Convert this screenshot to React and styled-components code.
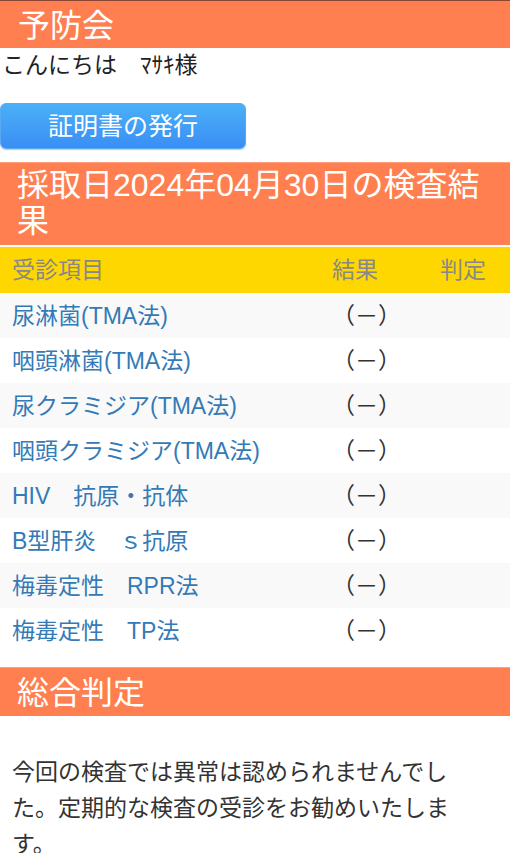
import React from "react";
import styled, { createGlobalStyle } from "styled-components";

const GlobalStyle = createGlobalStyle`
  html, body { margin: 0; padding: 0; background: #fff; }
  body {
    font-family: "Liberation Sans", "Noto Sans CJK JP", sans-serif;
    color: #333;
    -webkit-font-smoothing: antialiased;
  }
  * { box-sizing: border-box; }
`;

const Page = styled.div`
  width: 510px;
  display: flex;
  flex-direction: column;
`;

const AppBar = styled.header`
  height: 48px;
  background: #ff7f50;
  border-top: 1px solid #8a4634;
  color: #fff;
  font-size: 32px;
  line-height: 44px;
  padding: 3px 0 0 18px;
`;

const Greeting = styled.p`
  margin: 0;
  font-size: 23px;
  line-height: 32px;
  padding: 1px 0 0 2px;
  color: #222;
`;

const IssueButton = styled.button`
  margin-top: 22px;
  width: 246px;
  height: 46px;
  border: 1px solid #5aaaf2;
  border-radius: 6px;
  background: linear-gradient(#4bb0f7, #3a8ef5);
  color: #fff;
  font-family: inherit;
  font-size: 25px;
  line-height: 1;
  padding: 0;
  box-shadow: 0 1px 1px rgba(40, 110, 200, 0.35);
`;

const SectionTitle = styled.h2`
  margin: ${(p) => p.$mt}px 0 0;
  background: #ff7f50;
  border-top: 1px solid #ff9e7a;
  color: #fff;
  font-weight: 400;
  font-size: 32px;
  line-height: ${(p) => p.$lh}px;
  padding: ${(p) => p.$pt}px 12px ${(p) => p.$pb}px 17px;
`;

const Table = styled.div`
  margin-top: 2px;
  display: flex;
  flex-direction: column;
`;

const TableRow = styled.div`
  display: grid;
  grid-template-columns: 320px 108px 1fr;
  align-items: center;
  height: ${(p) => (p.$head ? 46 : 45)}px;
  padding-left: 12px;
  font-size: 23px;
  line-height: 30px;
  background: ${(p) => (p.$head ? "#ffd700" : p.$striped ? "#f9f9f9" : "#fff")};
  color: ${(p) => (p.$head ? "#888" : "#333")};
`;

const ItemName = styled.span`
  color: ${(p) => (p.$head ? "#888" : "#337ab7")};
  white-space: nowrap;
`;

const Cell = styled.span`
  white-space: nowrap;
`;

const Summary = styled.p`
  margin: 38px 0 0;
  padding: 0 45px 0 12px;
  font-size: 23px;
  line-height: 36px;
  color: #333;
`;

const items = [
  "尿淋菌(TMA法)",
  "咽頭淋菌(TMA法)",
  "尿クラミジア(TMA法)",
  "咽頭クラミジア(TMA法)",
  "HIV　抗原・抗体",
  "B型肝炎　ｓ抗原",
  "梅毒定性　RPR法",
  "梅毒定性　TP法",
];

export default function App() {
  return (
    <Page>
      <GlobalStyle />
      <AppBar>予防会</AppBar>
      <Greeting>こんにちは　ﾏｻｷ様</Greeting>
      <div>
        <IssueButton type="button">証明書の発行</IssueButton>
      </div>
      <SectionTitle $mt={13} $lh={36} $pt={4} $pb={6}>
        採取日2024年04月30日の検査結果
      </SectionTitle>
      <Table>
        <TableRow $head>
          <ItemName $head>受診項目</ItemName>
          <Cell>結果</Cell>
          <Cell>判定</Cell>
        </TableRow>
        {items.map((name, i) => (
          <TableRow key={name} $striped={i % 2 === 0}>
            <ItemName>{name}</ItemName>
            <Cell>（－）</Cell>
            <Cell />
          </TableRow>
        ))}
      </Table>
      <SectionTitle $mt={14} $lh={46} $pt={2} $pb={0}>
        総合判定
      </SectionTitle>
      <Summary>
        今回の検査では異常は認められませんでした。定期的な検査の受診をお勧めいたします。
      </Summary>
    </Page>
  );
}
